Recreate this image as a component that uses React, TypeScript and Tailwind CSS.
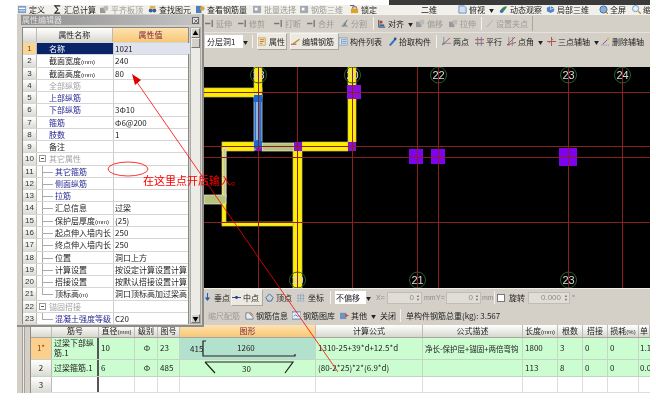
import React from "react";

const F = "[font-family:'Noto_Sans_CJK_SC','Liberation_Sans',sans-serif]";

type IconKind = "doc" | "sigma" | "gray" | "find" | "steel" | "batch" | "lock" | "view" | "orbit" | "local" | "full" | "zoom" | "ext" | "split" | "align" | "pen" | "prop" | "edit" | "list" | "pick" | "two" | "par" | "ang" | "three" | "del" | "info" | "lib" | "other" | "perp" | "mid" | "top" | "coord";

function Icon({ k }: { k: IconKind }) {
  const c = "w-[9px] h-[9px] shrink-0";
  const common = { viewBox: "0 0 10 10", className: c, fill: "none" } as const;
  switch (k) {
    case "doc": return <svg {...common}><rect x="0" y="1" width="9" height="8" fill="#7f9fc8" /><rect x="1" y="3" width="7" height="1.5" fill="#fff" /><rect x="1" y="6" width="7" height="1" fill="#dfe8f5" /></svg>;
    case "sigma": return <svg {...common}><path d="M8 1H2l3.5 4L2 9h6" stroke="#222" strokeWidth="1.2" /></svg>;
    case "gray": return <svg {...common}><path d="M0 3h6v6H0z" fill="#999" /><path d="M4 1h5v5H4z" fill="#bbb" /></svg>;
    case "find": return <svg {...common}><circle cx="3" cy="6" r="2.2" fill="#34619c" /><circle cx="7" cy="6" r="2.2" fill="#34619c" /><rect x="2" y="1" width="6" height="3" fill="#e3b24a" /></svg>;
    case "steel": return <svg {...common}><rect x="0" y="1" width="6" height="8" fill="#4d7fbb" /><circle cx="7" cy="4" r="2.5" fill="#d9a441" /></svg>;
    case "batch": return <svg {...common}><rect x="0" y="1" width="9" height="8" fill="#a3a9b3" /><rect x="2" y="3" width="3" height="3" fill="#fff" /></svg>;
    case "lock": return <svg {...common}><rect x="1" y="4" width="8" height="5" fill="#dca526" /><path d="M3 4V2h4v2" stroke="#755" /><rect x="0" y="0" width="5" height="1" fill="#555" /></svg>;
    case "view": return <svg {...common}><path d="M1 1h6l2 2v6H1z" fill="#cfe0f5" stroke="#4477aa" strokeWidth=".8" /></svg>;
    case "orbit": return <svg {...common}><path d="M1 8C3 2 7 1 9 2L6 6z" fill="#2f8f3f" /><circle cx="3" cy="7" r="2" fill="#3b6cc0" /></svg>;
    case "local": return <svg {...common}><path d="M5 1l4 2v4l-4 2-4-2V3z" fill="#4f86cc" /><path d="M5 5V1M5 5l4-2" stroke="#fff" strokeWidth=".7" /></svg>;
    case "full": return <svg {...common}><circle cx="5" cy="5" r="4" fill="#85aee0" stroke="#3c6ca8" /><path d="M7 7l3 3" stroke="#c38a22" strokeWidth="1.4" /></svg>;
    case "zoom": return <svg {...common}><circle cx="4" cy="4" r="3.4" fill="#e6eefa" stroke="#6a8fbc" /><path d="M7 7l3 3" stroke="#c38a22" strokeWidth="1.4" /></svg>;
    case "ext": return <svg {...common}><path d="M0 5h6M8 1v8" stroke="#777" strokeWidth="1.5" /></svg>;
    case "split": return <svg {...common}><path d="M1 9L5 3l4 6z" fill="#9aa" /><path d="M8 1L4 8" stroke="#666" /></svg>;
    case "align": return <svg {...common}><path d="M2 1v8h7" stroke="#233" /><rect x="3" y="2" width="3" height="3" fill="#c03a2e" /><rect x="3" y="6" width="5" height="2" fill="#2c5fb0" /></svg>;
    case "pen": return <svg {...common}><path d="M1 9l7-8 1 1-6 7z" fill="#bbb" /></svg>;
    case "prop": return <svg {...common}><rect x="0" y="1" width="8" height="8" fill="#f4e7c0" stroke="#b58b35" strokeWidth=".7" /><path d="M2 3h5M2 5h5M2 7h3" stroke="#b2531e" strokeWidth=".8" /></svg>;
    case "edit": return <svg {...common}><path d="M0 8h6" stroke="#b03020" /><path d="M2 7l7-5 1 1-7 5z" fill="#b9912f" /></svg>;
    case "list": return <svg {...common}><rect x="0" y="1" width="9" height="8" fill="#dce7f3" stroke="#6c8db3" strokeWidth=".7" /><path d="M3 2v6M4 3h4M4 5h4M4 7h4" stroke="#3f6fa8" strokeWidth=".7" /></svg>;
    case "pick": return <svg {...common}><path d="M1 9l6-7 2 1-6 7z" fill="#3274c2" /><circle cx="8" cy="2" r="1.5" fill="#1e4e90" /></svg>;
    case "two": return <svg {...common}><path d="M0 9L9 1" stroke="#c8402f" /><path d="M2 0v9M0 7h10" stroke="#5b7fb8" strokeWidth=".8" /></svg>;
    case "par": return <svg {...common}><path d="M0 3h10M0 7h10" stroke="#c8402f" /><path d="M3 0v10M7 0v10" stroke="#5b7fb8" /></svg>;
    case "ang": return <svg {...common}><path d="M0 9L9 0M0 9L10 6" stroke="#c8402f" /><path d="M2 0v10M6 0v10" stroke="#5b7fb8" strokeWidth=".8" /></svg>;
    case "three": return <svg {...common}><path d="M0 5h10" stroke="#c8402f" /><path d="M5 0v10" stroke="#c8402f" /><path d="M2 7l5-5" stroke="#5b7fb8" /></svg>;
    case "del": return <svg {...common}><path d="M0 9h9" stroke="#888" strokeDasharray="1 1" /><path d="M2 8l7-7" stroke="#7a3fb0" /><circle cx="8" cy="2" r="1.5" fill="#e0c040" /></svg>;
    case "info": return <svg {...common}><path d="M1 9V2h3l5 5v2z" fill="#e7eef8" stroke="#456" strokeWidth=".7" /><path d="M5 1l4 4" stroke="#c8402f" /></svg>;
    case "lib": return <svg {...common}><rect x="0" y="1" width="10" height="8" fill="#e9f0fa" stroke="#5a7ca8" /><path d="M2 6l2-2 2 2 2-1" stroke="#3478c0" /></svg>;
    case "other": return <svg {...common}><rect x="0" y="2" width="7" height="7" fill="#6d93c4" /><path d="M6 3l4 2-4 2z" fill="#d94f2b" /></svg>;
    case "perp": return <svg {...common}><path d="M5 0v7" stroke="#2060b0" strokeWidth="1.2" /><path d="M2 5l3 4 3-4z" fill="#2060b0" /></svg>;
    case "mid": return <svg {...common}><path d="M0 5h10" stroke="#1f3c88" /><circle cx="5" cy="5" r="1.6" fill="#1f3c88" /></svg>;
    case "top": return <svg {...common}><path d="M5 1l4 4-2 4H3L1 5z" stroke="#3a6fc0" strokeWidth="1.1" /></svg>;
    case "coord": return <svg {...common}><path d="M1 9h8M1 9V1M4 1v8M7 1v8M1 3h8M1 6h8" stroke="#4a78b8" strokeWidth=".7" strokeDasharray="1 1" /></svg>;
  }
}

function Tool({ i, t, w, gray, raised, caret }: { i?: IconKind; t: string; w: string; gray?: boolean; raised?: boolean; caret?: boolean }) {
  return (
    <div className={`${w} shrink-0 flex items-center gap-[2px] h-full overflow-hidden ${gray ? "text-[#9a9a94]" : "text-[#222]"} ${raised ? "bg-[#ece9e1] border border-[#f6f4ee] border-b-[#aaa79f] border-r-[#aaa79f]" : ""}`}>
      {i && <Icon k={i} />}
      <span className="whitespace-nowrap">{t}</span>
      {caret && <span className="text-[5px] ml-[2px]">▼</span>}
    </div>
  );
}

const Sep = () => <div className="w-px h-[13px] bg-[#9c9a92] border-r border-[#f5f3ec] shrink-0 mx-[3px]" />;

const Spin = () => (
  <span className="absolute right-0 top-0 bottom-0 w-[6px] flex flex-col items-center justify-center text-[4px] leading-[4px] text-[#777]">
    <span>▲</span>
    <span>▼</span>
  </span>
);

function Mm({ s }: { s: string }) {
  const m = s.match(/^(.*?)(\((?:mm|m|%)\))$/);
  if (!m) return <>{s}</>;
  return (
    <>
      {m[1]}
      <span className="text-[6px] [font-family:'Liberation_Sans',sans-serif]">{m[2]}</span>
    </>
  );
}

function CanvasArea() {
  const vx = [258, 297, 352, 417, 438, 568, 622];
  const hy = [92, 146, 157, 222];
  const ox = 204;
  const oy = 67;
  const Y = "#ffee00";
  const R = (x: number, y: number, x2: number, y2: number, fill: string, stroke?: string) => (
    <rect x={x - ox} y={y - oy} width={x2 - x} height={y2 - y} fill={fill} stroke={stroke} strokeWidth={stroke ? 0.7 : 0} />
  );
  const labels: [number, number, string][] = [
    [258, 75, "18"], [352, 75, "20"], [438, 75, "22"], [568, 75, "23"], [622, 75, "24"],
    [297, 280, "19"], [417, 280, "21"], [568, 280, "23"],
  ];
  return (
    <svg viewBox="0 0 446 221" className="w-[446px] h-[221px] block bg-black shrink-0">
      {R(204, 88, 262, 97, Y, "#c9b96a")}
      {R(254, 67, 262, 92, Y, "#c9b96a")}
      {R(222, 142, 254, 151, Y, "#c9b96a")}
      {R(302, 142, 348, 151, Y, "#c9b96a")}
      {R(348, 67, 356, 142, Y, "#c9b96a")}
      {R(293, 151, 302, 288, Y, "#c9b96a")}
      {R(222, 147, 226, 224, Y, "#c9b96a")}
      {R(222, 222, 293, 226, Y, "#c9b96a")}
      {R(262, 143, 294, 151, "#b7c27e", "#e6e6c8")}
      {R(223, 148, 226, 197, "#c5cc92", "#ecebd2")}
      {R(204, 195, 226, 204, "#b7c27e", "#ecebd2")}
      {R(254, 95, 262, 150, "#2f6fc4", "#cfdcf0")}
      {R(256, 98, 259, 140, "#8fb4e2")}
      {R(254, 95, 262, 102, "#1668d8")}
      {R(254, 141, 262, 148, "#1668d8")}
      {R(256, 148, 262, 151, "#8a10d0")}
      {R(294, 142, 302, 151, "#8a10d0")}
      {R(348, 142, 356, 151, "#8a10d0")}
      {R(347, 85, 361, 99, "#8a10e0")}
      {R(409, 149, 423, 164, "#8000f0")}
      {R(431, 149, 445, 164, "#8000f0")}
      {R(559, 148, 577, 166, "#8000f0")}
      {hy.map((y) => <line key={y} x1={0} x2={446} y1={y - oy + 0.5} y2={y - oy + 0.5} stroke="#8a1f1f" />)}
      {vx.map((x) => <line key={x} x1={x - ox + 0.5} x2={x - ox + 0.5} y1={0} y2={221} stroke="#8a1f1f" />)}
      {labels.map(([x, y, t], n) => (
        <g key={n}>
          <circle cx={x - ox + 0.5} cy={y - oy} r={8} stroke="#2c5f2c" fill="none" />
          <text x={x - ox + 0.5} y={y - oy + 4} textAnchor="middle" fontSize="11" fill="#d8d8d8" fontFamily="Liberation Sans, sans-serif">{t}</text>
        </g>
      ))}
    </svg>
  );
}

type PropRow = { n: string; v?: string; c?: string; tree?: "none" | "group" | "leaf" | "last" };
const B = "text-[#2a2a96]";
const G = "text-[#a4a4a4]";
const props: PropRow[] = [
  { n: "名称", v: "1021" },
  { n: "截面宽度(mm)", v: "240" },
  { n: "截面高度(mm)", v: "80" },
  { n: "全部纵筋", c: G },
  { n: "上部纵筋", c: B },
  { n: "下部纵筋", v: "3Φ10", c: B },
  { n: "箍筋", v: "Φ6@200", c: B },
  { n: "肢数", v: "1", c: B },
  { n: "备注" },
  { n: "其它属性", c: G, tree: "group" },
  { n: "其它箍筋", c: B, tree: "leaf" },
  { n: "侧面纵筋", c: B, tree: "leaf" },
  { n: "拉筋", c: B, tree: "leaf" },
  { n: "汇总信息", v: "过梁", tree: "leaf" },
  { n: "保护层厚度(mm)", v: "(25)", tree: "leaf" },
  { n: "起点伸入墙内长", v: "250", tree: "leaf" },
  { n: "终点伸入墙内长", v: "250", tree: "leaf" },
  { n: "位置", v: "洞口上方", tree: "leaf" },
  { n: "计算设置", v: "按设定计算设置计算", tree: "leaf" },
  { n: "搭接设置", v: "按默认搭接设置计算", tree: "leaf" },
  { n: "顶标高(m)", v: "洞口顶标高加过梁高", tree: "last" },
  { n: "锚固搭接", c: G, tree: "group" },
  { n: "混凝土强度等级", v: "C20", c: B, tree: "last" },
];

function PropWindow() {
  return (
    <div className="absolute left-[17px] top-[14px] w-[187px] h-[313px] bg-[#d4d0c8] border-r-2 border-b-2 border-[#8e8c86] pl-[4px] pt-[1px] z-10 flex flex-col">
      <div className="h-[10px] mr-[2px] flex items-center justify-between bg-gradient-to-r from-[#8f8f8f] to-[#c4c4c4] shrink-0">
        <span className="text-[8px] leading-none text-[#e2e2e2] pl-[1px]">属性编辑器</span>
        <span className="w-[7px] h-[7px] mr-[1px] bg-[#ddd] border border-[#666] text-[6px] leading-[5px] text-center">×</span>
      </div>
      <div className="flex mt-[2px] ml-[1px]">
        <div className="w-[167px] bg-white border border-[#888] border-b-0">
          <div className="flex h-[14px] text-[8px] leading-[14px]">
            <div className="w-[14px] bg-gradient-to-b from-white to-[#d8d7cf] border-r border-[#bbb]" />
            <div className="w-[77px] bg-gradient-to-b from-white to-[#d8d7cf] border-r border-[#bbb] text-center text-[#222]">属性名称</div>
            <div className="w-[76px] bg-gradient-to-b from-[#fde3ae] to-[#f7c777] text-center text-[#7a1f3d]">属性值</div>
          </div>
          {props.map((r, i) => (
            <div key={i} className="flex h-[12.27px] text-[8px] leading-[12px] border-t border-[#d6d6d6] text-[#222]">
              <div className={`w-[14px] shrink-0 border-r border-[#bbb] text-center ${i === 0 ? "bg-[#fbd593] text-[#7a4a10]" : "bg-gradient-to-b from-white to-[#dcdbd3] text-[#333]"} [font-family:'Liberation_Sans',sans-serif]`}>{i + 1}</div>
              <div className={`w-[77px] shrink-0 border-r border-[#ccc] relative whitespace-nowrap overflow-hidden ${i === 0 ? "bg-[#0a246a] text-white" : r.c ?? ""} ${r.tree === "leaf" || r.tree === "last" ? "pl-[18px]" : "pl-[12px]"}`}>
                {r.tree === "group" && (
                  <span className="absolute left-[2px] top-[2px] w-[7px] h-[7px] border border-[#999] bg-white flex items-center justify-center"><span className="w-[3px] h-px bg-[#555]" /></span>
                )}
                {(r.tree === "leaf" || r.tree === "last") && (
                  <>
                    <span className={`absolute left-[5px] top-0 w-px bg-[#aaa] ${r.tree === "last" ? "h-[6px]" : "h-full"}`} />
                    <span className="absolute left-[5px] top-[6px] w-[11px] h-px bg-[#aaa]" />
                  </>
                )}
                <Mm s={r.n} />
              </div>
              <div className={`w-[76px] shrink-0 pl-[1px] whitespace-nowrap overflow-hidden ${i === 0 ? "bg-[#dfe3ee]" : ""}`}>{r.v}</div>
            </div>
          ))}
        </div>
        <div className="w-[11px] ml-px h-[297px] bg-[#ecebe5] flex flex-col justify-between border border-[#aaa]">
          <div>
            <div className="h-[10px] bg-[#d4d0c8] border border-[#eee] border-r-[#777] border-b-[#777] text-[6px] leading-[8px] text-center">▲</div>
            <div className="h-[10px] bg-[#d4d0c8] border border-[#eee] border-r-[#777] border-b-[#777]" />
          </div>
          <div className="h-[9px] bg-[#d4d0c8] border border-[#eee] border-r-[#777] border-b-[#777] text-[6px] leading-[7px] text-center">▼</div>
        </div>
      </div>
    </div>
  );
}

function ColH({ w, t, hot }: { w: string; t: string; hot?: boolean }) {
  return (
    <div className={`${w} shrink-0 text-center border-r border-[#bdbdb5] whitespace-nowrap overflow-hidden ${hot ? "bg-gradient-to-b from-[#fde3ae] to-[#f7c777] text-[#7a1f3d]" : "bg-gradient-to-b from-white to-[#d8d7cf] text-[#222]"}`}><Mm s={t} /></div>
  );
}
function C({ w, children, cn }: { w: string; children?: React.ReactNode; cn?: string }) {
  return <div className={`${w} shrink-0 border-r border-[#c4d8c4] pl-[2px] flex items-center overflow-hidden ${cn ?? ""}`}>{children}</div>;
}

const Dataline = ({ cells, bg, fig, idx, idxc, h, name, shape }: { cells: string[]; bg: string; fig: string; idx: string; idxc: string; h: string; name: React.ReactNode; shape?: React.ReactNode }) => (
  <div className={`flex ${h} ${bg} border-b border-[#c4d4c4] text-[#222]`}>
    <div className={`w-[21px] shrink-0 flex items-center justify-center border-r border-[#bbb] ${idxc}`}>{idx}</div>
    <C w="w-[47px] border-r-2 border-r-[#555]"><span className="leading-[10px]">{name}</span></C>
    <C w="w-[36px]">{cells[0]}</C>
    <C w="w-[23px]" cn="justify-center">{cells[1]}</C>
    <C w="w-[22px]">{cells[2]}</C>
    <div className={`w-[136px] shrink-0 border-r border-[#c4d8c4] relative ${fig}`}>{shape}</div>
    <C w="w-[107px]"><span className="whitespace-nowrap">{cells[3]}</span></C>
    <C w="w-[100px]"><span className="whitespace-nowrap text-[7.5px]">{cells[4]}</span></C>
    <C w="w-[35px]">{cells[5]}</C>
    <C w="w-[25px]">{cells[6]}</C>
    <C w="w-[25px]">{cells[7]}</C>
    <C w="w-[31px]">{cells[8]}</C>
    <div className="flex-1 pl-[1px] flex items-center overflow-hidden">{cells[9]}</div>
  </div>
);

export default function App() {
  return (
    <div className={`relative w-[656px] h-[403px] bg-white overflow-hidden text-[8px] leading-none ${F} blur-[0.3px]`}>
      <div className="h-[5px] flex justify-end pr-[6px]">
        <div className="w-[261px] h-full bg-[#3a3a3a]" />
      </div>
      <div className="ml-[17px] w-[633px] flex flex-col">
        {/* top toolbar 1 */}
        <div className="h-[9px] flex items-center bg-[#f1f0ea] pl-[1px]">
          <Tool i="doc" t="定义" w="w-[35px]" />
          <Tool i="sigma" t="汇总计算" w="w-[47px]" />
          <Tool i="gray" t="平齐板顶" w="w-[48px]" gray />
          <Tool i="find" t="查找图元" w="w-[48px]" />
          <Tool i="steel" t="查看钢筋量" w="w-[57px]" />
          <Tool i="batch" t="批量选择" w="w-[47px]" gray />
          <Tool i="batch" t="钢筋三维" w="w-[50px]" gray />
          <Tool i="lock" t="锁定" w="w-[71px]" />
          <Tool t="二维" w="w-[37px]" />
          <Tool i="view" t="俯视" w="w-[41px]" caret />
          <Tool i="orbit" t="动态观察" w="w-[47px]" />
          <Tool i="local" t="局部三维" w="w-[53px]" />
          <Tool i="full" t="全屏" w="w-[33px]" />
          <Tool i="zoom" t="缩" w="w-[18px]" />
        </div>
        {/* top toolbar 2 */}
        <div className="h-[19px] flex items-center bg-[#d4d0c8] pl-[188px] border-t border-[#f4f2ec] border-b border-b-[#e6e3dc]">
          <Tool i="ext" t="延伸" w="w-[33px]" gray />
          <Tool i="ext" t="修剪" w="w-[36px]" gray />
          <Tool i="ext" t="打断" w="w-[33px]" gray />
          <Tool i="ext" t="合并" w="w-[33px]" gray />
          <Tool i="split" t="分割" w="w-[30px]" gray />
          <Sep />
          <Tool i="align" t="对齐" w="w-[39px]" caret />
          <Tool i="gray" t="偏移" w="w-[33px]" gray />
          <Tool i="gray" t="拉伸" w="w-[29px]" gray />
          <Sep />
          <Tool i="pen" t="设置夹点" w="w-[46px]" gray />
          <div className="w-px h-[15px] bg-[#a9a79f] ml-[1px] shrink-0" />
        </div>
        {/* top toolbar 3 */}
        <div className="h-[17px] flex items-center bg-[#d4d0c8] pl-[188px]">
          <div className="w-[44px] h-[13px] bg-white flex items-center justify-between pl-[2px] text-[#222] shrink-0">
            分层洞1<span className="text-[5px] pr-px bg-[#d4d0c8] h-full flex items-center">▼</span>
          </div>
          <Sep />
          <div className="w-[1px] shrink-0" />
          <Tool i="prop" t="属性" w="w-[30px]" raised />
          <div className="w-[3px] shrink-0" />
          <Tool i="edit" t="编辑钢筋" w="w-[49px]" raised />
          <Tool i="list" t="构件列表" w="w-[49px]" />
          <Tool i="pick" t="拾取构件" w="w-[45px]" />
          <Sep />
          <div className="w-[2px] shrink-0" />
          <Tool i="two" t="两点" w="w-[33px]" />
          <Tool i="par" t="平行" w="w-[32px]" />
          <Tool i="ang" t="点角" w="w-[40px]" caret />
          <Tool i="three" t="三点辅轴" w="w-[54px]" caret />
          <Tool i="del" t="删除辅轴" w="w-[44px]" />
        </div>
        <div className="h-[17px] bg-[#d4d0c8]" />
        {/* canvas row */}
        <div className="flex h-[221px] bg-[#d4d0c8]">
          <div className="w-[187px] shrink-0" />
          <CanvasArea />
        </div>
        {/* bottom toolbar 1 */}
        <div className="h-[18px] flex items-center bg-[#d4d0c8] pl-[186px] border-t border-[#efeee8] text-[#222]">
          <Tool i="perp" t="垂点" w="w-[28px]" />
          <Tool i="mid" t="中点" w="w-[32px]" raised />
          <div className="w-[2px] shrink-0" />
          <Tool i="top" t="顶点" w="w-[32px]" />
          <Tool i="coord" t="坐标" w="w-[30px]" />
          <Sep />
          <div className="w-[37px] h-[13px] ml-[1px] bg-white flex items-center justify-between pl-[1px] shrink-0">
            不偏移<span className="text-[5px] pr-px bg-[#d4d0c8] h-full flex items-center">▼</span>
          </div>
          <div className="flex items-center text-[#8c8c86] text-[7px] [font-family:'Liberation_Sans',sans-serif] shrink-0">
            <span className="w-[15px] pl-[4px]">X=</span>
            <span className="relative w-[35px] h-[12px] bg-[#e0ddd6] border border-[#c0bdb5] text-right pr-[7px] leading-[10px] text-[8px]">0<Spin /></span>
            <span className="w-[14px] pl-[2px]">mm</span>
            <span className="w-[10px]">Y=</span>
            <span className="relative w-[35px] h-[12px] bg-[#e0ddd6] border border-[#c0bdb5] text-right pr-[7px] leading-[10px] text-[8px]">0<Spin /></span>
            <span className="w-[13px] pl-[1px]">mm</span>
          </div>
          <div className="w-px h-[13px] bg-[#9c9a92] border-r border-[#f5f3ec] shrink-0" />
          <div className="w-[8px] h-[8px] ml-[2px] bg-white border border-[#777] shrink-0" />
          <span className="ml-[4px] w-[19px] shrink-0">旋转</span>
          <span className="relative w-[42px] h-[12px] bg-[#e0ddd6] border border-[#c0bdb5] text-right pr-[8px] leading-[10px] text-[#8c8c86] [font-family:'Liberation_Sans',sans-serif] shrink-0">0.000<Spin /></span>
          <span className="ml-[2px] text-[#8c8c86]">°</span>
        </div>
        {/* bottom toolbar 2 */}
        <div className="h-[19px] flex items-center bg-[#d4d0c8] pl-[191px]">
          <Tool t="缩尺配筋" w="w-[37px]" gray />
          <Tool i="info" t="钢筋信息" w="w-[47px]" />
          <Tool i="lib" t="钢筋图库" w="w-[48px]" />
          <Tool i="other" t="其他" w="w-[40px]" caret />
          <Tool t="关闭" w="w-[17px]" />
          <Sep />
          <span className="ml-[2px] text-[#222] whitespace-nowrap">单构件钢筋总重(kg): 3.567</span>
        </div>
        {/* table */}
        <div className="flex h-[68px] bg-[#d4d0c8]">
          <div className="w-[14px] shrink-0 border-r border-[#8f8d87] flex justify-center">
            <div className="w-[3px] bg-[#ecebe5] border-x border-[#a3a19a]" />
          </div>
          <div className="flex-1 bg-white flex flex-col overflow-hidden text-[8px]">
            <div className="flex h-[12px] leading-[12px] border-y border-[#a8a8a0] box-content -mt-px">
              <ColH w="w-[21px]" t="" />
              <ColH w="w-[47px]" t="筋号" />
              <ColH w="w-[36px]" t="直径(mm)" />
              <ColH w="w-[23px]" t="级别" />
              <ColH w="w-[22px]" t="图号" />
              <ColH w="w-[136px]" t="图形" hot />
              <ColH w="w-[107px]" t="计算公式" />
              <ColH w="w-[100px]" t="公式描述" />
              <ColH w="w-[35px]" t="长度(mm)" />
              <ColH w="w-[25px]" t="根数" />
              <ColH w="w-[25px]" t="搭接" />
              <ColH w="w-[31px]" t="损耗(%)" />
              <ColH w="flex-1" t="单" />
            </div>
            <Dataline
              h="h-[22px]"
              bg="bg-[#ccfdd0]"
              fig="bg-[#b2e2cd]"
              idx="1*"
              idxc="bg-[#fbd08c] text-[#8a3a10]"
              name={<>过梁下部纵<br />筋.1</>}
              cells={["10", "Φ", "23", "1310-25+39*d+12.5*d", "净长-保护层+锚固+两倍弯钩", "1800", "3", "0", "0", "1.1"]}
              shape={
                <>
                  <span className="absolute left-[10px] top-[7px]">415</span>
                  <span className="absolute left-[57px] top-[6px]">1260</span>
                  <svg viewBox="0 0 136 22" className="absolute inset-0 w-[136px] h-[22px]" fill="none">
                    <path d="M26 3h-3v15h92v-2" stroke="#222" strokeWidth="1.2" />
                  </svg>
                </>
              }
            />
            <Dataline
              h="h-[18px]"
              bg="bg-[#ccfdd0]"
              fig="bg-[#ccfdd0]"
              idx="2"
              idxc="bg-gradient-to-b from-white to-[#dcdbd3]"
              name="过梁箍筋.1"
              cells={["6", "Φ", "485", "(80-2*25)*2*(6.9*d)", "", "113", "8", "0", "0", "0.0"]}
              shape={
                <>
                  <span className="absolute left-[62px] top-[5px]">30</span>
                  <svg viewBox="0 0 136 18" className="absolute inset-0 w-[136px] h-[18px]" fill="none">
                    <path d="M25 2h88l-8 11M25 2l10 11" stroke="#222" strokeWidth="1.2" />
                  </svg>
                </>
              }
            />
            <div className="flex h-[16px] text-[#222] border-b border-[#ddd]">
              <div className="w-[21px] shrink-0 flex items-center justify-center border-r border-[#bbb] bg-gradient-to-b from-white to-[#dcdbd3]">3</div>
              <div className="w-[47px] shrink-0 border-r-2 border-r-[#555]" />
              <div className="w-[36px] shrink-0 border-r border-[#ddd]" />
              <div className="w-[23px] shrink-0 border-r border-[#ddd]" />
              <div className="w-[22px] shrink-0 border-r border-[#ddd]" />
              <div className="w-[136px] shrink-0 border-r border-[#ddd]" />
              <div className="w-[107px] shrink-0 border-r border-[#ddd]" />
              <div className="w-[100px] shrink-0 border-r border-[#ddd]" />
              <div className="w-[35px] shrink-0 border-r border-[#ddd]" />
              <div className="w-[25px] shrink-0 border-r border-[#ddd]" />
              <div className="w-[25px] shrink-0 border-r border-[#ddd]" />
              <div className="w-[31px] shrink-0 border-r border-[#ddd]" />
            </div>
          </div>
        </div>
      </div>

      <PropWindow />

      {/* red annotation */}
      <svg viewBox="0 0 656 403" className="absolute inset-0 w-[656px] h-[403px] z-20 pointer-events-none" fill="none">
        <line x1="134" y1="78" x2="338" y2="372" stroke="#ff0000" strokeWidth="0.8" />
        <path d="M132 74l9 6-6 5z" fill="#e00000" />
        <ellipse cx="128" cy="169" rx="20" ry="7" stroke="#ff0000" strokeWidth="0.8" />
      </svg>
      <span className="absolute left-[143px] top-[173px] z-20 text-[11px] leading-[14px] text-[#ff0000] whitespace-nowrap">在这里点开后输入。</span>
    </div>
  );
}
